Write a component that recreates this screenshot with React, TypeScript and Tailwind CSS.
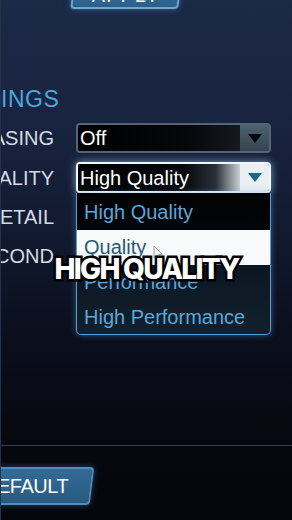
import { ReactNode } from "react";

const Label = ({ children }: { children: ReactNode }) => (
    <div className="w-[53px] shrink-0 flex justify-end overflow-hidden whitespace-nowrap text-[20px] leading-[20px] text-[#d6dbe2]">
        {children}
    </div>
);

const Triangle = ({ color }: { color: string }) => (
    <svg width="14" height="9" viewBox="0 0 14 9">
        <path d="M0 0 H14 L7 9 Z" fill={color} />
    </svg>
);

const options = ["High Quality", "Quality", "Performance", "High Performance"];

export default function App() {
    return (
        <div className="w-[292px] h-[520px] overflow-hidden relative flex flex-col border-l border-[#26324a] bg-[linear-gradient(180deg,#1c2947_0%,#18233f_25%,#111a2f_45%,#0b0f1e_64%,#07080f_85%,#05060b_100%)] font-['Liberation_Sans',Arial,sans-serif]">
            {/* apply button, mostly above the frame */}
            <div className="ml-[71px] -mt-[20px] w-[108px] h-[29px] -skew-x-[7deg] rounded-b-[4px] border-2 border-[#6ea6cc] bg-[linear-gradient(180deg,#3a78a6,#2a5f88)] shadow-[0_0_6px_rgba(90,160,220,0.5)] flex justify-center">
                <span className="skew-x-[7deg] mt-[3px] text-[20px] leading-[20px] text-white tracking-[1px]">APPLY</span>
            </div>

            <h2 className="mt-[78px] text-[23px] leading-[24px] text-[#4ea6de] tracking-[0.5px]">INGS</h2>

            {/* settings rows */}
            <div className="mt-[12px] flex flex-col gap-[9px]">
                <div className="flex items-center h-[30px]">
                    <Label>ASING</Label>
                    <div className="ml-[22px] w-[195px] h-[30px] flex rounded-[4px] border-2 border-[#51667a] overflow-hidden">
                        <div className="flex-1 flex items-center pl-[2px] bg-[linear-gradient(90deg,#000000,#06080b_70%,#151a20)] text-[20px] leading-[20px] text-white">Off</div>
                        <div className="w-[29px] flex items-center justify-center bg-[linear-gradient(180deg,#4d6171,#34444f)]">
                            <Triangle color="#050608" />
                        </div>
                    </div>
                </div>

                <div className="flex items-center h-[31px]">
                    <Label>ALITY</Label>
                    <div className="ml-[22px] w-[195px] h-[31px] relative">
                        <div className="h-full flex rounded-[4px] border-2 border-[#f2f6f8] overflow-hidden shadow-[0_0_8px_rgba(170,215,255,0.7)]">
                            <div className="flex-1 flex items-center pl-[2px] bg-[linear-gradient(90deg,#000000,#06090c_65%,#2a3038_85%,#c9d1d6)] text-[20px] leading-[20px] text-white">High Quality</div>
                            <div className="w-[29px] flex items-center justify-center bg-[#e9eff2]">
                                <Triangle color="#1b6886" />
                            </div>
                        </div>

                        {/* open menu */}
                        <div className="absolute top-full left-0 w-[195px] h-[142px] z-10 pt-[2px] rounded-b-[5px] border-[1.5px] border-t-0 border-[#5a9dca] shadow-[0_0_6px_rgba(80,150,210,0.55)] bg-[linear-gradient(180deg,#010203_0%,#03060a_25%,#0c1824_55%,#12202d_100%)] flex flex-col">
                            {options.map((o, i) => (
                                <div key={o} className={`h-[35px] px-[7px] text-[20px] leading-[35px] ${i === 1 ? "bg-[#f7f9fa] text-[#255a73]" : "text-[#5aa7da]"}`}>
                                    {o}
                                </div>
                            ))}
                            <svg className="absolute left-[76px] top-[52px]" width="11" height="16" viewBox="0 0 11 16">
                                <path d="M1 1 L1 13 L4 10 L6.5 15 L8 14.3 L5.6 9.5 L9.5 9.5 Z" fill="#f4f6f7" stroke="#9aa3a8" strokeWidth="1" />
                            </svg>
                        </div>
                    </div>
                </div>

                <div className="flex items-center h-[30px]">
                    <Label>ETAIL</Label>
                </div>
                <div className="flex items-center h-[30px]">
                    <Label>COND</Label>
                </div>
            </div>

            {/* footer */}
            <div className="mt-auto">
                <div className="h-[1px] bg-[#2e3c52]" />
                <div className="mt-[21px] mb-[15px] -ml-[20px] w-[111px] h-[38px] -skew-x-[7deg] rounded-[4px] border-2 border-[#4f8dbd] bg-[linear-gradient(180deg,#336b96,#285a80)] shadow-[0_0_6px_rgba(80,150,210,0.45)] flex items-center">
                    <span className="skew-x-[7deg] ml-[14px] text-[20px] leading-[20px] text-white tracking-[-0.5px]">EFAULT</span>
                </div>
            </div>

            {/* video caption */}
            <div className="absolute left-0 right-0 top-[255px] z-20 text-center font-['Inter',sans-serif] font-extrabold text-[28px] leading-[28px] tracking-[-0.06em] text-white [paint-order:stroke_fill] [-webkit-text-stroke:5px_#000]">
                HIGH QUALITY
            </div>
        </div>
    );
}
